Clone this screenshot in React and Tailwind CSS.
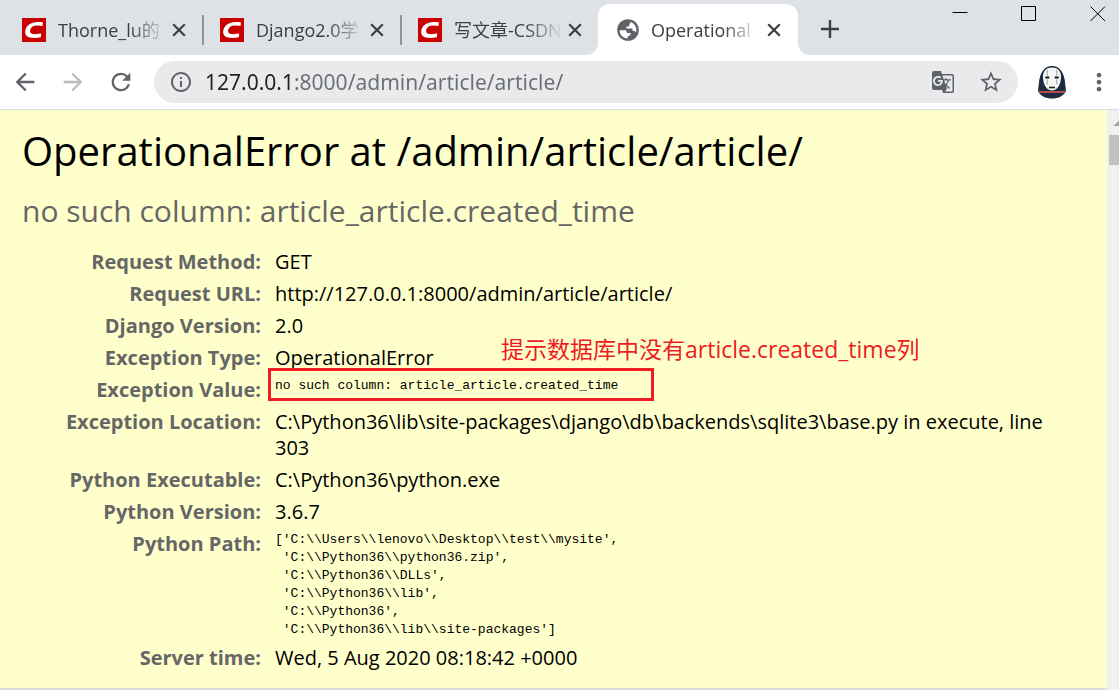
import React from "react";
import { MdArrowBack, MdArrowForward, MdRefresh, MdInfoOutline, MdStarBorder, MdGTranslate, MdMoreVert } from "react-icons/md";

const UI = "font-['Open_Sans','Noto_Sans_CJK_SC',sans-serif]";

function CsdnIcon() {
  return (
    <svg viewBox="0 0 24 24" className="size-6 shrink-0" aria-hidden="true">
      <rect width="24" height="24" fill="#c80000" />
      <path d="M21 4.400 L20.500 8 C17.500 7.300 13 7 10.600 8.400 C8.200 10 7.400 13.400 8.800 15 C10.400 16.600 15 16.200 19.200 15.600 L18.800 19.200 C14 20.200 7.600 20.400 4.800 18 C2.200 15.600 3 10.800 5.400 8 C8.600 4.200 15 3.200 21 4.400 Z" fill="#fff" />
    </svg>
  );
}

function GlobeIcon() {
  return (
    <svg viewBox="0 0 22 22" className="size-[22px] shrink-0" aria-hidden="true">
      <circle cx="11" cy="11" r="10.8" fill="#5f6368" />
      <path d="M13.500 2.900 C17 4 19.400 7.200 19.400 11 C19.400 11.900 19.200 12.700 19 13.400 C18.600 12.400 17.800 11.900 16.800 11.900 H15.600 V10.600 C15.600 9.900 15.100 9.500 14.400 9.500 H9.400 V7.600 H11.200 C11.900 7.600 12.300 7.100 12.300 6.500 V4.900 C13 4.700 13.500 3.900 13.500 2.900 Z" fill="#fff" />
      <path d="M2.600 11.200 H8 C9 11.200 9.600 11.900 9.600 12.800 C9.600 13.600 10.200 14 11 14 H13.800 C13.600 15.600 12.600 17.200 10.600 17.400 V19.400 C6 19.400 2.600 15.800 2.600 11.200 Z" fill="#fff" />
    </svg>
  );
}

function Avatar() {
  return (
    <svg viewBox="0 0 30 34" className="h-[34px] w-[30px]" aria-hidden="true">
      <path d="M15 1 C23 1 27 8 28 17 L29 26 C27 31 21 33.500 15 33.500 C9 33.500 3 31 1 26 L2 17 C3 8 7 1 15 1 Z" fill="#1d2b3e" />
      <path d="M15 2.500 C21.500 2.500 24.500 7 24 13 C23.500 20 20 25.500 15 25.500 C10 25.500 6.500 20 6 13 C5.600 7 8.500 2.500 15 2.500 Z" fill="#f6f6f4" />
      <path d="M10.300 5.500 v5 M19.700 5.500 v5 M10.300 14.500 v5 M19.700 14.500 v5" stroke="#b4b6ba" strokeWidth="1.400" />
      <path d="M8.300 12.500 h4 M17.700 12.500 h4" stroke="#111" strokeWidth="1.800" />
      <path d="M12 22.500 h6" stroke="#222" strokeWidth="1.600" />
      <path d="M2 27 h26" stroke="#f0624c" strokeWidth="1.400" />
    </svg>
  );
}

function Tab({ icon, title, active, divider }) {
  return (
    <div className={"relative flex items-center " + (active ? "w-[200px] rounded-t-xl bg-white pl-[19px] pr-[14px]" : "w-[198px] pl-[22px] pr-[9px]")}>
      {icon}
      <a href="#tab" className="ml-3 min-w-0 flex-1 whitespace-nowrap text-[18px] leading-7 text-[#3c4043] [mask-image:linear-gradient(to_right,#000_72px,transparent_108px)]">
        {title}
      </a>
      <button aria-label={"Close " + title} className="flex size-5 shrink-0 items-center justify-center">
        <svg viewBox="0 0 14 14" className="size-[14px]" fill="none" stroke="#3c4043" strokeWidth="2.2">
          <path d="M1.200 1.200 L12.800 12.800 M12.800 1.200 L1.200 12.800" />
        </svg>
      </button>
      {divider && <span className="absolute right-[-6px] top-[11px] h-[30px] w-[2px] bg-[#8f9398]" />}
      {active && (
        <>
          <svg viewBox="0 0 12 12" className="absolute -left-3 bottom-0 size-3"><path d="M12 0 V12 H0 A12 12 0 0 0 12 0 Z" fill="#fff" /></svg>
          <svg viewBox="0 0 12 12" className="absolute -right-3 bottom-0 size-3"><path d="M0 0 V12 H12 A12 12 0 0 1 0 0 Z" fill="#fff" /></svg>
        </>
      )}
    </div>
  );
}

const PATHS = `['C:\\\\Users\\\\lenovo\\\\Desktop\\\\test\\\\mysite',
 'C:\\\\Python36\\\\python36.zip',
 'C:\\\\Python36\\\\DLLs',
 'C:\\\\Python36\\\\lib',
 'C:\\\\Python36',
 'C:\\\\Python36\\\\lib\\\\site-packages']`;

const PRE = "font-['Liberation_Mono',monospace] text-[13px] leading-[18px]";

function Row({ label, children }) {
  return (
    <tr className="align-top">
      <th scope="row" className="w-[253px] whitespace-nowrap py-[3px] pr-[14px] text-right font-bold text-[#666666]">{label}</th>
      <td className="py-[3px]">{children}</td>
    </tr>
  );
}

export default function App() {
  return (
    <div className={"flex min-h-screen flex-col bg-white " + UI}>
      <header>
        <div className="flex h-[55px] bg-[#dee1e6]">
          <nav aria-label="Tabs" className="flex pt-1">
            <Tab icon={<CsdnIcon />} title="Thorne_lu的" divider />
            <Tab icon={<CsdnIcon />} title="Django2.0学" divider />
            <Tab icon={<CsdnIcon />} title="写文章-CSDN" />
            <div className="flex pl-1">
              <Tab icon={<GlobeIcon />} title="Operational" active />
            </div>
          </nav>
          <button aria-label="New tab" className="ml-[22px] mt-[3px] flex w-5 items-center justify-center">
            <svg viewBox="0 0 18 18" className="size-[18px] shrink-0" stroke="#3c4043" strokeWidth="2.4"><path d="M9 0 V18 M0 9 H18" /></svg>
          </button>
          <div className="ml-auto flex h-[27px] items-center gap-[53px] pr-[13px]">
            <button aria-label="Minimize"><svg viewBox="0 0 16 16" className="size-4" stroke="#000"><path d="M0.500 6.500 H15.500" /></svg></button>
            <button aria-label="Maximize"><svg viewBox="0 0 16 16" className="size-4" fill="none" stroke="#000"><path d="M0.500 0.500 H14.500 V14.500 H0.500 Z" /></svg></button>
            <button aria-label="Close"><svg viewBox="0 0 16 16" className="size-4" fill="none" stroke="#000"><path d="M0.500 0.500 L15 15 M15 0.500 L0.500 15" /></svg></button>
          </div>
        </div>
        <div className="flex h-[55px] items-center border-b border-[#dadce0] pl-[11px] pr-[6px] text-[#5f6368]">
          <button aria-label="Back"><MdArrowBack className="size-7" /></button>
          <button aria-label="Forward" className="ml-5 text-[#babcbe]"><MdArrowForward className="size-7" /></button>
          <button aria-label="Reload" className="ml-5"><MdRefresh className="size-7" /></button>
          <div className="ml-[19px] flex h-[42px] flex-1 items-center rounded-full bg-[#e9eaec] pl-[15px] pr-[14px]">
            <MdInfoOutline className="size-6 shrink-0" />
            <input aria-label="Address" defaultValue="127.0.0.1:8000/admin/article/article/" className="ml-3 h-8 min-w-0 flex-1 bg-linear-to-r from-[#202124] from-[89px] to-[#6b6e72] to-[89px] bg-clip-text font-['Noto_Sans',sans-serif] text-[21px] text-transparent caret-black outline-none" />
            <button aria-label="Translate"><MdGTranslate className="size-6" /></button>
            <button aria-label="Bookmark" className="ml-[23px]"><MdStarBorder className="size-[26px]" /></button>
          </div>
          <button aria-label="Profile" className="ml-[19px]"><Avatar /></button>
          <button aria-label="Menu" className="ml-[18px]"><MdMoreVert className="size-7" /></button>
        </div>
      </header>

      <div className="flex flex-1">
        <main className="min-w-0 flex-1 border-b-2 border-[#dddddd] bg-[#ffffcc] pb-[14px] pl-[22px] pr-[30px] text-[20px] leading-[26px] text-black">
          <h1 className="pt-[14px] text-[40px] leading-[54px]">OperationalError at /admin/article/article/</h1>
          <p className="pb-[14px] pt-[12px] text-[30px] leading-[42px] text-[#666666]">no such column: article_article.created_time</p>
          <table className="w-full border-collapse">
            <tbody>
              <Row label="Request Method:">GET</Row>
              <Row label="Request URL:">http://127.0.0.1:8000/admin/article/article/</Row>
              <Row label="Django Version:">2.0</Row>
              <Row label="Exception Type:">OperationalError</Row>
              <Row label="Exception Value:">
                <div className="relative">
                  <pre className={PRE}>no such column: article_article.created_time</pre>
                  <div className="absolute -left-[7px] -top-[9px] h-[33px] w-[386px] border-[3px] border-[#ed1c24]" />
                  <p className="absolute -top-[43px] left-[226px] whitespace-nowrap text-[23px] leading-[30px] text-[#ed1c24]">提示数据库中没有article.created_time列</p>
                </div>
              </Row>
              <Row label="Exception Location:">C:\Python36\lib\site-packages\django\db\backends\sqlite3\base.py in execute, line 303</Row>
              <Row label="Python Executable:">C:\Python36\python.exe</Row>
              <Row label="Python Version:">3.6.7</Row>
              <Row label="Python Path:"><pre className={PRE}>{PATHS}</pre></Row>
              <Row label="Server time:">Wed, 5 Aug 2020 08:18:42 +0000</Row>
            </tbody>
          </table>
        </main>
        <div className="w-3 shrink-0 overflow-hidden bg-[#f0f0f0] pl-[2px]" aria-hidden="true">
          <svg viewBox="0 0 10 25" className="h-[25px] w-[10px]"><path d="M4.500 16 L10 10.500 V16 Z" fill="#a3a3a3" /></svg>
          <div className="h-[30px] bg-[#c1c1c1]" />
        </div>
      </div>
    </div>
  );
}
